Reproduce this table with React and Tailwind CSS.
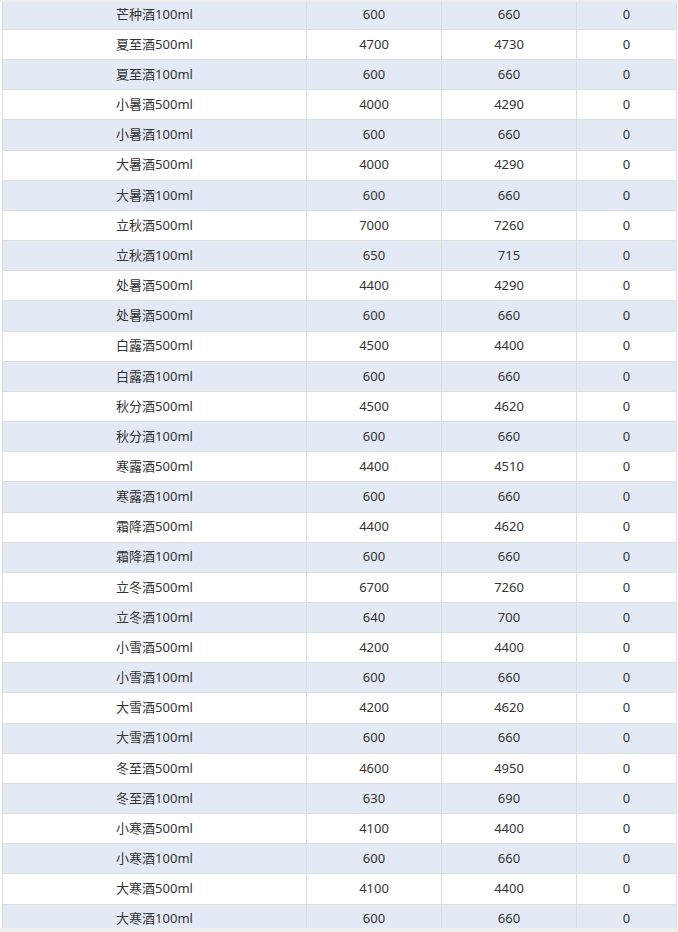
const rows = [
  ["芒种酒100ml", "600", "660", "0"],
  ["夏至酒500ml", "4700", "4730", "0"],
  ["夏至酒100ml", "600", "660", "0"],
  ["小暑酒500ml", "4000", "4290", "0"],
  ["小暑酒100ml", "600", "660", "0"],
  ["大暑酒500ml", "4000", "4290", "0"],
  ["大暑酒100ml", "600", "660", "0"],
  ["立秋酒500ml", "7000", "7260", "0"],
  ["立秋酒100ml", "650", "715", "0"],
  ["处暑酒500ml", "4400", "4290", "0"],
  ["处暑酒500ml", "600", "660", "0"],
  ["白露酒500ml", "4500", "4400", "0"],
  ["白露酒100ml", "600", "660", "0"],
  ["秋分酒500ml", "4500", "4620", "0"],
  ["秋分酒100ml", "600", "660", "0"],
  ["寒露酒500ml", "4400", "4510", "0"],
  ["寒露酒100ml", "600", "660", "0"],
  ["霜降酒500ml", "4400", "4620", "0"],
  ["霜降酒100ml", "600", "660", "0"],
  ["立冬酒500ml", "6700", "7260", "0"],
  ["立冬酒100ml", "640", "700", "0"],
  ["小雪酒500ml", "4200", "4400", "0"],
  ["小雪酒100ml", "600", "660", "0"],
  ["大雪酒500ml", "4200", "4620", "0"],
  ["大雪酒100ml", "600", "660", "0"],
  ["冬至酒500ml", "4600", "4950", "0"],
  ["冬至酒100ml", "630", "690", "0"],
  ["小寒酒500ml", "4100", "4400", "0"],
  ["小寒酒100ml", "600", "660", "0"],
  ["大寒酒500ml", "4100", "4400", "0"],
  ["大寒酒100ml", "600", "660", "0"],
];

export default function App() {
  return (
    <div className="h-[932px] w-[678px] bg-[#eeeeee] pt-[2px] font-['Noto_Sans','Noto_Sans_CJK_SC',sans-serif] text-[13px] text-[#333]">
      <div className="h-[926px] overflow-hidden bg-white pl-[2px]">
        <div className="-mt-[2.17px] w-[675px] border-l border-r border-[#dddddd]">
          {rows.map((r, i) => (
            <div
              key={i}
              className={`grid h-[30.17px] grid-cols-[303px_135px_135px_1fr] border-b border-[#dddddd] ${
                i % 2 === 0 ? "bg-[#e4eaf5]" : "bg-white"
              }`}
            >
              <div className="flex items-center justify-center">{r[0]}</div>
              <div className="flex items-center justify-center border-l border-[#dddddd]">{r[1]}</div>
              <div className="flex items-center justify-center border-l border-[#dddddd]">{r[2]}</div>
              <div className="flex items-center justify-center border-l border-[#dddddd]">{r[3]}</div>
            </div>
          ))}
        </div>
      </div>
    </div>
  );
}
